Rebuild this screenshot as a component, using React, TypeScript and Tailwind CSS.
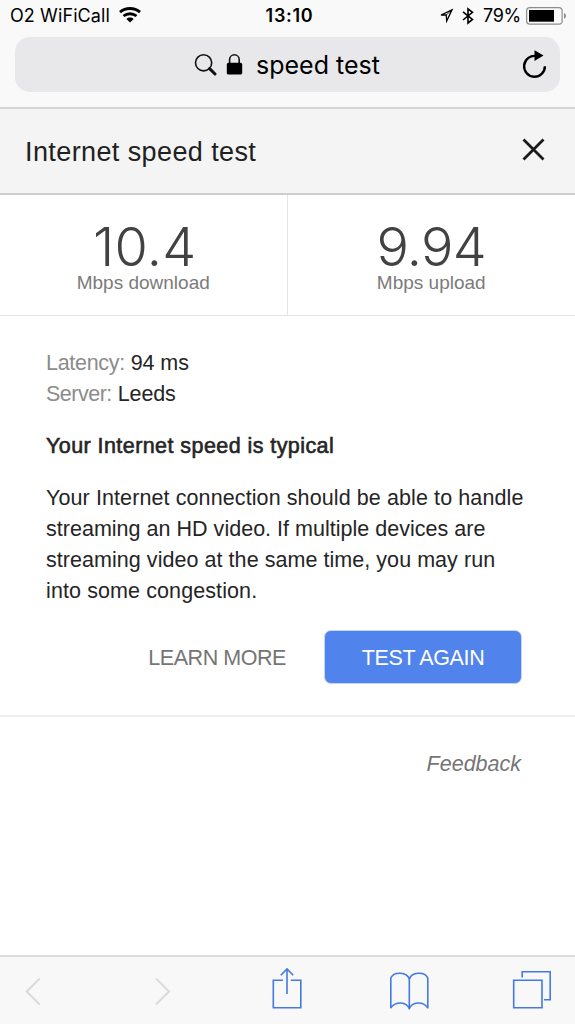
import type { ReactNode } from "react";

function StatusBar() {
  return (
    <div className="grid h-[37px] grid-cols-3 pl-[10px] pr-[9px] font-['Inter',sans-serif] text-[18px] leading-[32px] text-black">
      <div className="flex gap-[9px] whitespace-nowrap">
        <span className="tracking-[0.1px]">O2 WiFiCall</span>
        <svg className="mt-[7px] h-[16px] w-[22px]" viewBox="0 0 22 16" fill="none" stroke="#000" strokeWidth="2.9">
          <path d="M1 5.1C6.7.3 15.3.3 21 5.1" />
          <path d="M4.5 9C8.3 5.9 13.7 5.9 17.5 9" />
          <path d="M7.4 11.9C9.4 10.1 12.6 10.1 14.6 11.9L11 15.6z" fill="#000" stroke="none" />
        </svg>
      </div>
      <div className="pl-[3px] text-center font-semibold tracking-[0.7px]">13:10</div>
      <div className="flex justify-end whitespace-nowrap">
        <svg className="mr-[8px] mt-[8px] h-[16px] w-[16px]" viewBox="0 0 16 16" fill="none" stroke="#000" strokeWidth="1.3">
          <path d="M14 1.8L3 7H8.2L8.7 13Z" />
          <path d="M14 1.8L8.2 7" strokeWidth="0.8" />
        </svg>
        <svg className="mr-[9px] mt-[7px] h-[18px] w-[12px]" viewBox="0 0 12 18" fill="none" stroke="#000" strokeWidth="1.6">
          <path d="M1 4.8L10.5 12.5L6 16V1.8L10.5 5.3L1 13" />
        </svg>
        <span className="mr-[5px] tracking-[-0.3px]">79%</span>
        <svg className="-mr-px mt-[7px] h-[18px] w-[41px]" viewBox="0 0 41 18">
          <rect x="0.6" y="0.6" width="35.5" height="16.5" rx="3.2" fill="none" stroke="#8c8c8c" strokeWidth="1.2" />
          <rect x="3" y="3" width="25" height="11.7" fill="#000" />
          <path d="M38 6q2 .8 2 2.9T38 11.8z" fill="#8c8c8c" />
        </svg>
      </div>
    </div>
  );
}

function AddressBar() {
  return (
    <div className="mx-[15px] flex h-[55px] items-center rounded-[15px] bg-[#e8e8ea] pl-[179px] pr-[13px]">
      <svg className="h-[24px] w-[23px] shrink-0" viewBox="0 0 23 24" fill="none" stroke="#111">
        <circle cx="9.6" cy="9.8" r="8.1" strokeWidth="1.6" />
        <path d="M15.6 15.6L21 21" strokeWidth="3" strokeLinecap="round" />
      </svg>
      <svg className="ml-[9px] h-[22px] w-[17px] shrink-0" viewBox="0 0 17 22">
        <path d="M3.6 10V5.6a4.8 4.8 0 0 1 9.6 0V10" fill="none" stroke="#111" strokeWidth="1.6" />
        <rect x="0.8" y="8.8" width="15.4" height="11.8" rx="1.7" />
      </svg>
      <span className="ml-[13px] whitespace-nowrap font-['Inter',sans-serif] text-[25px] leading-[30px] text-black">speed test</span>
      <svg className="ml-auto h-[29px] w-[25px]" viewBox="0 0 25 29">
        <path d="M22.9 16.2A10.4 10.4 0 1 1 14.5 6.1" fill="none" stroke="#000" strokeWidth="2.4" />
        <path d="M12.5 .3V11L21.5 5.6z" />
      </svg>
    </div>
  );
}

function Stat({ value, label }: { value: ReactNode; label: ReactNode }) {
  return (
    <div className="flex flex-col items-center whitespace-nowrap pt-[28px]">
      <div className="font-['Inter',sans-serif] text-[54px] font-light leading-[48px] text-[#424242]">{value}</div>
      <div className="text-[19px] leading-[24px] text-[#7b7b7b]">{label}</div>
    </div>
  );
}

function Toolbar() {
  return (
    <nav className="flex h-[69px] items-start border-t-2 border-[#dcdddc] bg-[#f8f8f8] pl-[25px] pr-[23px]">
      <svg className="mt-[20px] h-[29px] w-[16px]" viewBox="0 0 16 29" fill="none" stroke="#dadada" strokeWidth="2">
        <path d="M14.7 1.5L1.7 14.5L14.7 27.5" />
      </svg>
      <svg className="ml-[114px] mt-[20px] h-[29px] w-[16px]" viewBox="0 0 16 29" fill="none" stroke="#dadada" strokeWidth="2">
        <path d="M1 1.5L14 14.5L1 27.5" />
      </svg>
      <svg className="ml-[101px] mt-[10px] h-[43px] w-[30px]" viewBox="0 0 30 43" fill="none" stroke="#4379e2" strokeWidth="1.6">
        <path d="M11 13.2H1.3V40.8H28.8V13.2H18.8M15 27V2.3M8.8 8.2L15 2L21.2 8.2" />
      </svg>
      <svg className="ml-[87px] mt-[14px] h-[40px] w-[41px]" viewBox="0 0 41 40" fill="none" stroke="#4379e2" strokeWidth="1.6" strokeLinejoin="round">
        <path d="M20.3 8.2C18 .6 4.8.3 1.8 7V36.8C6.5 30.2 17.5 30.2 20.3 37.8C23.1 30.2 34.1 30.2 38.8 36.8V7C35.8.3 22.6.6 20.3 8.2V38.2" />
      </svg>
      <svg className="ml-auto mt-[13px] h-[40px] w-[40px]" viewBox="0 0 40 40" fill="none" stroke="#4379e2" strokeWidth="1.6">
        <path d="M1.7 10.2H30V37.8H1.7zM10.2 7.5V1.7H38.2V29.8H32" />
      </svg>
    </nav>
  );
}

export default function App() {
  return (
    <div className="flex h-[1024px] w-[575px] flex-col overflow-hidden bg-white font-['Liberation_Sans',Arial,sans-serif]">
      <header className="h-[109px] border-b-2 border-[#d5d5d6] bg-[#f9f9f9]">
        <StatusBar />
        <AddressBar />
      </header>
      <div className="flex h-[86px] items-center justify-between border-b-2 border-[#cdcdcd] bg-[#f4f4f4] pl-[25px] pr-[30px]">
        <h1 className="whitespace-nowrap pt-px text-[27px] leading-[30px] tracking-[0.4px] text-[#212121]">Internet speed test</h1>
        <svg className="-mt-[4px] h-[23px] w-[23px]" viewBox="0 0 23 23" stroke="#1b1b1b" strokeWidth="2.8">
          <path d="M1.5 1.5L21.5 21.5M21.5 1.5L1.5 21.5" />
        </svg>
      </div>
      <section className="grid h-[121px] grid-cols-2 border-b border-[#e4e4e4]">
        <div className="border-r border-[#e4e4e4]">
          <Stat value={<span className="pl-[3px] tracking-[0.3px]">10.4</span>} label="Mbps download" />
        </div>
        <Stat value={<span className="tracking-[-0.7px]">9.94</span>} label="Mbps upload" />
      </section>
      <main className="h-[401px] whitespace-nowrap border-b-2 border-[#eeeeee] pl-[46px] pr-[53px] pt-[32px] text-[21.5px] leading-[31px] tracking-[0.1px] text-[#252525]">
        <div className="tracking-[-0.1px]"><span className="tracking-[-0.3px] text-[#8c8c8c]">Latency:</span> 94 ms</div>
        <div className="tracking-[-0.1px]"><span className="tracking-[-0.5px] text-[#8c8c8c]">Server:</span> Leeds</div>
        <h2 className="mt-[21px] font-normal tracking-[0.43px] [-webkit-text-stroke:0.6px_#252525]">Your Internet speed is typical</h2>
        <p className="mt-[21px]">
          Your Internet connection should be able to handle<br />
          <span className="tracking-[0.02px]">streaming an HD video. If multiple devices are</span><br />
          <span className="tracking-[0.05px]">streaming video at the same time, you may run</span><br />
          into some congestion.
        </p>
        <div className="mt-[23px] flex items-center justify-end gap-[38px]">
          <button className="pt-[2px] text-[21.5px] tracking-[-0.45px] text-[#757575]">LEARN MORE</button>
          <button className="h-[54px] w-[198px] rounded-[7px] border border-[#c3d5fa] bg-[#5183ed] pt-[2px] text-[21.5px] tracking-[-0.35px] text-white">TEST AGAIN</button>
        </div>
      </main>
      <div className="flex flex-1 justify-end pr-[54px] pt-[32px] text-[21.5px] italic leading-[31px] text-[#757575]">Feedback</div>
      <Toolbar />
    </div>
  );
}
